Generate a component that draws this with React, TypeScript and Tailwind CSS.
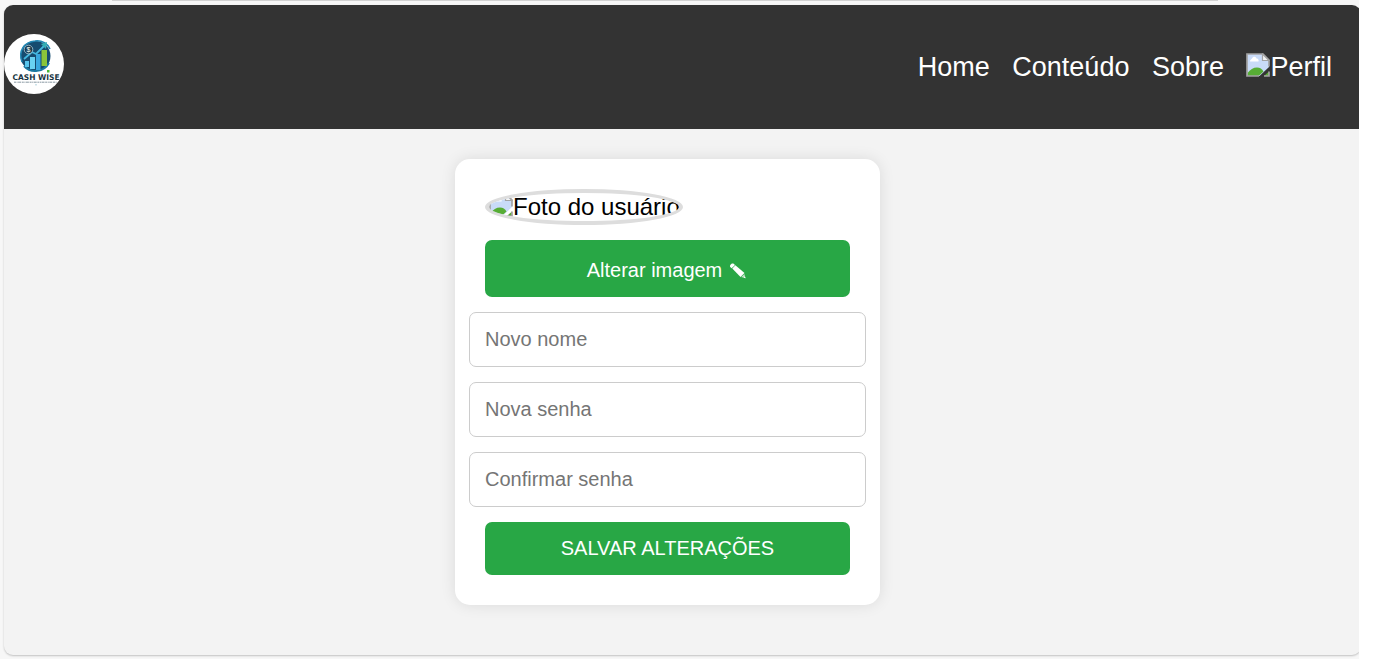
import React from "react";

function BrokenImage({ className }: { className: string }) {
  return (
    <svg viewBox="0 0 24 24" className={className} aria-hidden="true">
      <path d="M1 1H17L23 7V14L13.500 23H1Z" fill="#c9dbf8" />
      <path d="M4 8.500C4 6.500 5.500 6.500 6 5.500C7 3 10 3.500 10.500 5.500C12.500 5.500 13 7.500 12.500 8.500Z" fill="#fff" />
      <path d="M1.500 23V20C4 16.500 7.500 14.500 11 14.500C14 14.500 16 16 17.500 18.500L12.500 23Z" fill="#57ad35" />
      <path d="M23 18.500V23H18Z" fill="#57ad35" />
      <path d="M13 23H1V1H17L23 7V13.500M23 18.500V23H18" fill="none" stroke="#a3a3a3" strokeWidth="1.700" />
      <path d="M16.500 1V7.500H23Z" fill="#f5f5f5" stroke="#a3a3a3" strokeWidth="1.200" />
    </svg>
  );
}

function Logo() {
  return (
    <svg viewBox="0 0 60 60" className="h-[60px] w-[60px] shrink-0 rounded-full bg-white" role="img" aria-label="Cash Wise">
      <circle cx="31.500" cy="22" r="15" fill="#164c70" />
      <path d="M18 28C14 17 20 8 31 7C38 6 44 10 46 15" fill="none" stroke="#2388b4" strokeWidth="1.500" />
      <path d="M20 32C27 40 40 38 45 29" fill="none" stroke="#1b78a1" strokeWidth="2" />
      <rect x="21" y="27" width="4" height="6" fill="#58c5ed" />
      <rect x="26" y="23" width="5" height="12" fill="#69d2f2" />
      <rect x="32" y="20" width="4.500" height="16" fill="#39a8df" />
      <rect x="37.500" y="16" width="5.500" height="16" fill="#8ac53a" />
      <path d="M20 25L28 18L32 20L41 11" fill="none" stroke="#45b8df" strokeWidth="1.800" />
      <path d="M37 10L43 8L42 15Z" fill="#35aeb4" />
      <circle cx="24.500" cy="15.500" r="4.300" fill="#173b50" stroke="#b5d1dc" strokeWidth=".8" />
      <text x="24.500" y="18" textAnchor="middle" fontSize="7" fill="#fff" className="font-['Liberation_Sans']">$</text>
      <text x="8.500" y="46" textLength="47" lengthAdjust="spacingAndGlyphs" fontSize="7.8" fontWeight="700" fill="#173341" className="font-['DejaVu_Sans']">CASH WISE</text>
      <rect x="43" y="36" width="2.500" height="2.500" fill="#47b735" />
      <path d="M10 48.200H53" stroke="#8998a2" strokeWidth="1" strokeDasharray="2 .6 1 .5 3 .7" />
      <path d="M32 50V51.500" stroke="#9bc7d5" />
    </svg>
  );
}

function Pencil() {
  return (
    <svg viewBox="0 0 18 18" className="ml-[7px] h-[18px] w-[18px] translate-y-px" aria-hidden="true">
      <path d="M1.200 5C.2 3.200 2.800.700 4.700 1.700L6 2.900L2.700 6.200Z" fill="#fff" />
      <path d="M3.300 6.400L6.400 3.300L15.500 11.100L11.500 15.100Z" fill="#fff" />
      <path d="M15.400 11.900L16.500 16.200L12.200 15.100Z" fill="#b9e2c2" />
      <path d="M16 14.500L16.500 16.200L14.800 15.800Z" fill="#fff" />
    </svg>
  );
}

const fields = [
  { label: "Novo nome", type: "text" },
  { label: "Nova senha", type: "password" },
  { label: "Confirmar senha", type: "password" },
];

export default function App() {
  return (
    <div className="h-[659px] w-full overflow-hidden bg-white font-['Liberation_Sans',Arial,sans-serif]">
      <div className="h-full w-[1359px] overflow-hidden bg-[#f7f7f7] pl-1">
        <div className="ml-[108px] h-px w-[1106px] bg-[#d2d2d2]" />
        <div className="mt-1 flex h-[650px] w-[1357px] flex-col overflow-hidden rounded-[9px] bg-[#f3f3f3] shadow-[0_1px_2px_rgba(0,0,0,0.22)]">
          <header className="flex h-[124px] shrink-0 items-center justify-between bg-[#333] pr-[29px]">
            <div className="mt-[-6px]"><Logo /></div>
            <nav className="flex items-center gap-[22.5px] text-[27px] leading-8 text-white">
              <a href="#home">Home</a>
              <a href="#conteudo">Conteúdo</a>
              <a href="#sobre">Sobre</a>
              <a href="#perfil" className="flex items-center"><BrokenImage className="mt-[-5px] h-6 w-6" />Perfil</a>
            </nav>
          </header>
          <main className="flex justify-center pr-[30px] pt-[30px]">
            <form className="flex h-[446px] w-[425px] flex-col items-center gap-[15px] rounded-[15px] bg-white p-[30px] shadow-[0_0_15px_rgba(0,0,0,0.1)]" onSubmit={(e) => e.preventDefault()}>
              <div className="flex h-9 w-[198px] shrink-0 items-center self-start overflow-hidden rounded-[50%] border-4 border-[#ddd] text-2xl leading-7 whitespace-nowrap text-black">
                <BrokenImage className="mt-[-5px] h-6 w-6 shrink-0" />
                <span>Foto do usuário</span>
              </div>
              <button type="button" className="flex h-[57px] w-full shrink-0 items-center justify-center rounded-[7px] bg-[#28a745] pt-[3px] pr-px text-xl text-white">Alterar imagem<Pencil /></button>
              {fields.map(({ label, type }) => (
                <input key={label} type={type} placeholder={label} className="h-[55px] w-[397px] shrink-0 rounded-[7px] border border-[#ccc] bg-white px-[15px] text-xl text-black placeholder:text-[#757575]" />
              ))}
              <button type="submit" className="h-[53px] w-full shrink-0 rounded-[7px] bg-[#28a745] pb-0.5 text-xl text-white">SALVAR ALTERAÇÕES</button>
            </form>
          </main>
        </div>
      </div>
    </div>
  );
}
